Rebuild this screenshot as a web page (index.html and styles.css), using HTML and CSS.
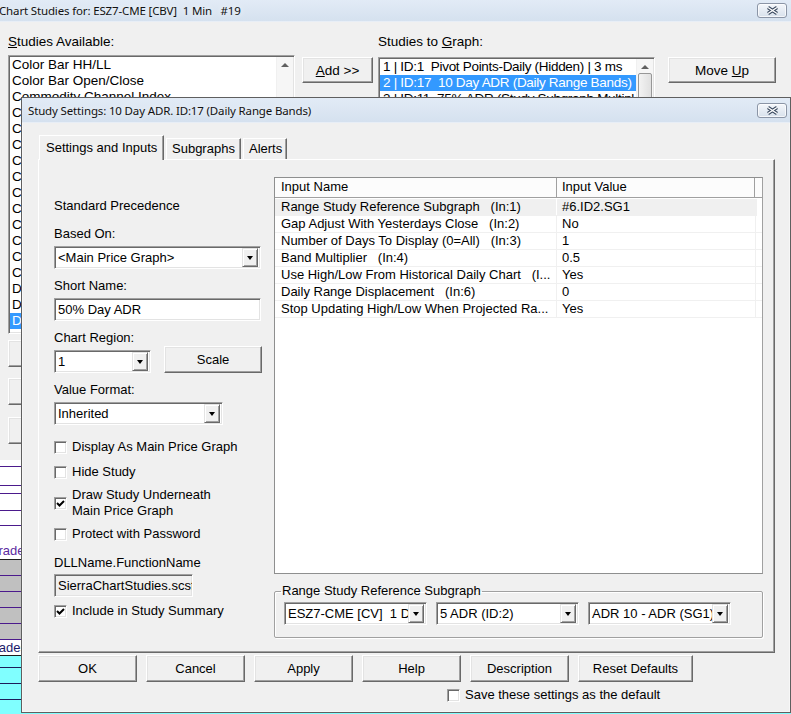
FILE: index.html
```html
<!DOCTYPE html>
<html lang="en">

<head>
    <meta charset="UTF-8">
    <title>Study Settings</title>
    <link rel="stylesheet" href="styles.css">
</head>

<body>
    <div class="desktop">
        <!-- background window -->
        <div class="main-win">
            <div class="titlebar">
                <span class="title">Chart Studies for: ESZ7-CME [CBV]  1 Min   #19</span>
                <span class="close-btn">
                    <svg width="13" height="9" viewBox="0 0 13 9"><path d="M2 1.5 L11 7.5 M11 1.5 L2 7.5" stroke="#3b4a60" stroke-width="3.4" /><path d="M2 1.5 L11 7.5 M11 1.5 L2 7.5" stroke="#fff" stroke-width="1.4" /></svg>
                </span>
            </div>
            <div class="main-body">
                <div class="avail-col">
                    <p class="lbl"><u>S</u>tudies Available:</p>
                    <div class="listbox avail-list">
                        <div class="list-items">
                            <p>Color Bar HH/LL</p>
                            <p>Color Bar Open/Close</p>
                            <p>Commodity Channel Index</p>
                            <p>Commitment of Traders</p>
                            <p>Compare Study Subgraphs</p>
                            <p>Connors RSI</p>
                            <p>Correlation Coefficient</p>
                            <p>Countdown Timer</p>
                            <p>Cumulative Delta Bars - Ticks</p>
                            <p>Cumulative Delta Bars - Trade Size</p>
                            <p>Cumulative Delta Bars - Volume</p>
                            <p>Cumulative Sum of Study</p>
                            <p>Cumulative Volume</p>
                            <p>Cycle Period</p>
                            <p>Daily High/Low Lines</p>
                            <p>Daily OHLC</p>
                            <p class="sel">Daily Range Bands</p>
                            <p>Darvas Box</p>
                        </div>
                        <div class="vscroll"><span class="up-arrow"></span></div>
                    </div>
                    <button class="btn side-btn"><span>Remove</span></button>
                    <button class="btn side-btn gap"><span>Settings</span></button>
                    <button class="btn side-btn gap2"><span>Find</span></button>
                </div>
                <div class="add-col">
                    <button class="btn add-btn"><span><u>A</u>dd &gt;&gt;</span></button>
                </div>
                <div class="graph-col">
                    <p class="lbl">Studies to <u>G</u>raph:</p>
                    <div class="listbox graph-list">
                        <div class="list-items">
                            <p>1 | ID:1  Pivot Points-Daily (Hidden) | 3 ms</p>
                            <p class="sel">2 | ID:17  10 Day ADR (Daily Range Bands)</p>
                            <p>3 | ID:11  75% ADR (Study Subgraph Multipl</p>
                        </div>
                        <div class="vscroll"><span class="up-arrow"></span><span class="thumb"></span></div>
                    </div>
                </div>
                <div class="move-col">
                    <button class="btn move-btn"><span>Move <u>U</u>p</span></button>
                </div>
            </div>
        </div>

        <!-- chart data rows peeking out behind the dialog -->
        <div class="chart-rows">
            <div class="crow h7"></div>
            <div class="crow h19"></div>
            <div class="crow h8"></div>
            <div class="crow h17"></div>
            <div class="crow h15"></div>
            <div class="crow h34 label">Trades</div>
            <div class="crow grey"></div>
            <div class="crow grey"></div>
            <div class="crow grey"></div>
            <div class="crow grey"></div>
            <div class="crow grey"></div>
            <div class="crow label short">Trades</div>
            <div class="crow cyan h12"></div>
            <div class="crow cyan"></div>
            <div class="crow cyan"></div>
            <div class="crow cyan"></div>
        </div>

        <!-- Study Settings dialog -->
        <div class="dialog">
            <div class="titlebar dlg-title">
                <span class="title">Study Settings: 10 Day ADR. ID:17 (Daily Range Bands)</span>
                <span class="close-btn">
                    <svg width="13" height="9" viewBox="0 0 13 9"><path d="M2 1.5 L11 7.5 M11 1.5 L2 7.5" stroke="#3b4a60" stroke-width="3.4" /><path d="M2 1.5 L11 7.5 M11 1.5 L2 7.5" stroke="#fff" stroke-width="1.4" /></svg>
                </span>
            </div>
            <div class="dlg-body">
                <div class="tabs">
                    <div class="tab active">Settings and Inputs</div>
                    <div class="tab sub">Subgraphs</div>
                    <div class="tab alerts">Alerts</div>
                </div>
                <div class="panel">
                    <div class="left-col">
                        <p class="txt">Standard Precedence</p>
                        <p class="txt mt12">Based On:</p>
                        <div class="combo w207">
                            <span class="combo-val">&lt;Main Price Graph&gt;</span>
                            <span class="drop"><i></i></span>
                        </div>
                        <p class="txt mt9">Short Name:</p>
                        <div class="field w207">50% Day ADR</div>
                        <p class="txt mt9">Chart Region:</p>
                        <div class="region-row">
                            <div class="combo w97">
                                <span class="combo-val">1</span>
                                <span class="drop"><i></i></span>
                            </div>
                            <button class="btn scale-btn"><span>Scale</span></button>
                        </div>
                        <p class="txt mt9">Value Format:</p>
                        <div class="combo w169">
                            <span class="combo-val">Inherited</span>
                            <span class="drop"><i></i></span>
                        </div>
                        <div class="check-row mt14">
                            <span class="chk"></span>
                            <span>Display As Main Price Graph</span>
                        </div>
                        <div class="check-row mt9">
                            <span class="chk"></span>
                            <span>Hide Study</span>
                        </div>
                        <div class="check-row mt7">
                            <span class="chk"><svg width="11" height="11" viewBox="0 0 11 11"><path d="M2 5 L4.5 7.5 L9 3" stroke="#000" stroke-width="2" fill="none" /></svg></span>
                            <span>Draw Study Underneath<br>Main Price Graph</span>
                        </div>
                        <div class="check-row mt7">
                            <span class="chk"></span>
                            <span>Protect with Password</span>
                        </div>
                        <p class="txt mt13">DLLName.FunctionName</p>
                        <div class="field readonly w139">SierraChartStudies.scsf_DailyRangeBands</div>
                        <div class="check-row mt6">
                            <span class="chk"><svg width="11" height="11" viewBox="0 0 11 11"><path d="M2 5 L4.5 7.5 L9 3" stroke="#000" stroke-width="2" fill="none" /></svg></span>
                            <span>Include in Study Summary</span>
                        </div>
                    </div>

                    <div class="right-col">
                        <div class="grid">
                            <div class="grid-head">
                                <span class="hcell name-col">Input Name</span>
                                <span class="hcell value-col">Input Value</span>
                                <span class="hcell rest"></span>
                            </div>
                            <div class="grid-rows">
                                <div class="grow hot"><span class="name-col">Range Study Reference Subgraph   (In:1)</span><span class="value-col">#6.ID2.SG1</span></div>
                                <div class="grow"><span class="name-col">Gap Adjust With Yesterdays Close   (In:2)</span><span class="value-col">No</span></div>
                                <div class="grow"><span class="name-col">Number of Days To Display (0=All)   (In:3)</span><span class="value-col">1</span></div>
                                <div class="grow"><span class="name-col">Band Multiplier   (In:4)</span><span class="value-col">0.5</span></div>
                                <div class="grow"><span class="name-col">Use High/Low From Historical Daily Chart   (I...</span><span class="value-col">Yes</span></div>
                                <div class="grow"><span class="name-col">Daily Range Displacement   (In:6)</span><span class="value-col">0</span></div>
                                <div class="grow"><span class="name-col">Stop Updating High/Low When Projected Ra...</span><span class="value-col">Yes</span></div>
                            </div>
                        </div>
                        <fieldset class="group">
                            <legend>Range Study Reference Subgraph</legend>
                            <div class="group-combos">
                                <div class="combo w143">
                                    <span class="combo-val">ESZ7-CME [CV]  1 Day</span>
                                    <span class="drop"><i></i></span>
                                </div>
                                <div class="combo w143">
                                    <span class="combo-val">5 ADR (ID:2)</span>
                                    <span class="drop"><i></i></span>
                                </div>
                                <div class="combo w143">
                                    <span class="combo-val">ADR 10 - ADR (SG1)</span>
                                    <span class="drop"><i></i></span>
                                </div>
                            </div>
                        </fieldset>
                    </div>
                </div>

                <div class="dlg-buttons">
                    <button class="btn dlg-btn"><span>OK</span></button>
                    <button class="btn dlg-btn"><span>Cancel</span></button>
                    <button class="btn dlg-btn"><span>Apply</span></button>
                    <button class="btn dlg-btn"><span>Help</span></button>
                    <button class="btn dlg-btn"><span>Description</span></button>
                    <button class="btn dlg-btn wide"><span>Reset Defaults</span></button>
                </div>
                <div class="check-row save-row">
                    <span class="chk"></span>
                    <span>Save these settings as the default</span>
                </div>
            </div>
        </div>
    </div>
</body>

</html>
```

FILE: styles.css
```css
* {
    margin: 0;
    padding: 0;
    box-sizing: border-box;
}

body {
    background: #f0f0f0;
    font-family: "Liberation Sans", Arial, sans-serif;
    font-size: 13px;
    color: #000;
}

.desktop {
    position: relative;
    width: 791px;
    height: 714px;
    overflow: hidden;
    background: #f0f0f0;
}

/* window chrome */
.titlebar {
    display: flex;
    align-items: center;
    justify-content: space-between;
    height: 22px;
    padding-right: 4px;
    background: linear-gradient(#e2ebf6, #d5e1ef);
    border-bottom: 1px solid #e8eef6;
}

.title {
    white-space: pre;
    font-family: "Noto Sans", "Open Sans", sans-serif;
    font-size: 11.5px;
    letter-spacing: -0.15px;
    color: #111;
    text-shadow: 0 0 6px #fff;
}

.main-win .title {
    margin-left: -1px;
}

.close-btn {
    display: flex;
    align-items: center;
    justify-content: center;
    width: 30px;
    height: 15px;
    border: 1px solid #8b95a6;
    border-radius: 3px;
    background: linear-gradient(#f4f7fb, #d8e1ec);
    box-shadow: inset 0 0 0 1px rgba(255, 255, 255, .7);
}

/* buttons */
.btn {
    display: flex;
    align-items: center;
    justify-content: center;
    font-family: inherit;
    font-size: 13px;
    color: #000;
    white-space: pre;
    background: #f0f0f0;
    border: 1px solid;
    border-color: #fff #696969 #696969 #fff;
    box-shadow: inset -1px -1px 0 #a0a0a0, inset 1px 1px 0 #e3e3e3;
}

/* background window */
.main-win {
    height: 460px;
    background: #f0f0f0;
}

.main-body {
    display: flex;
    padding: 12px 0 0 8px;
    font-size: 13.5px;
}

.main-body .btn {
    font-size: 13.5px;
}

.lbl {
    line-height: 16px;
}

.avail-col {
    width: 287px;
}

.listbox {
    display: flex;
    background: #fff;
    border: 1px solid;
    border-color: #a0a0a0 #fff #fff #a0a0a0;
    box-shadow: inset 1px 1px 0 #696969, inset -1px -1px 0 #e3e3e3;
    padding: 1px;
    overflow: hidden;
}

.avail-list {
    margin-top: 5px;
    height: 279px;
}

.list-items {
    flex: 1;
    overflow: hidden;
}

.list-items p {
    height: 16px;
    line-height: 16px;
    padding-left: 2px;
    white-space: pre;
}

.list-items p.sel {
    background: #3399ff;
    color: #fff;
}

.vscroll {
    position: relative;
    width: 17px;
    background: #f6f6f6;
    border-left: 1px solid #f0f0f0;
}

.up-arrow {
    display: block;
    margin: 6px auto 0;
    width: 0;
    height: 0;
    border-left: 4px solid transparent;
    border-right: 4px solid transparent;
    border-bottom: 4px solid #606060;
}

.thumb {
    display: block;
    margin: 4px 1px 0;
    height: 40px;
    border: 1px solid #979797;
    border-radius: 2px;
    background: linear-gradient(90deg, #f3f3f3, #e0e0e0);
}

.side-btn {
    margin-top: 6px;
    width: 100px;
    height: 27px;
}

.side-btn.gap {
    margin-top: 11px;
}

.side-btn.gap2 {
    margin-top: 12px;
}

.add-col {
    margin-left: 7px;
    padding-top: 23px;
}

.add-btn {
    width: 71px;
    height: 26px;
}

.graph-col {
    margin-left: 5px;
}

.graph-list {
    margin-top: 7px;
    width: 277px;
    height: 60px;
}

.graph-list .list-items p {
    padding-left: 3px;
    letter-spacing: -0.3px;
}

.move-col {
    margin-left: 13px;
    padding-top: 23px;
}

.move-btn {
    width: 108px;
    height: 26px;
}

/* chart rows behind */
.chart-rows {
    background: #fff;
}

.crow {
    height: 16px;
    border-bottom: 1px solid #4b1a8c;
    font-size: 13px;
    color: #5b2aa0;
    white-space: nowrap;
}

.crow.h7 { height: 7px; }
.crow.h19 { height: 19px; }
.crow.h8 { height: 8px; }
.crow.h17 { height: 17px; }
.crow.h15 { height: 15px; }
.crow.h12 { height: 12px; }

.crow.h34 {
    height: 34px;
    padding-top: 17px;
}

.crow.label {
    margin-left: -9px;
    border-bottom-color: #1d1d1d;
}

.crow.short {
    margin-left: -13px;
    color: #1a1a6a;
}

.crow.grey {
    background: #c0c0c0;
}

.crow.cyan {
    background: #80ffff;
    border-bottom-color: #1d1d5a;
}

/* dialog */
.dialog {
    position: absolute;
    left: 21px;
    top: 97px;
    width: 770px;
    height: 616px;
    background: #f0f0f0;
    border: 1px solid #5f5f5f;
    box-shadow: inset 0 0 0 1px #f7f7f7;
}

.dlg-title {
    height: 25px;
    padding-left: 6px;
    padding-right: 3px;
}

.dlg-body {
    padding: 12px 0 0 16px;
}

.tabs {
    display: flex;
    align-items: flex-end;
    height: 24px;
    padding-left: 1px;
}

.tab {
    height: 21px;
    line-height: 19px;
    padding-left: 5px;
    border: 1px solid;
    border-bottom: none;
    border-color: #fff #696969 #696969 #fff;
    box-shadow: inset -1px 0 0 #a0a0a0;
    background: #f0f0f0;
}

.tab.active {
    position: relative;
    z-index: 1;
    width: 125px;
    height: 25px;
    margin-bottom: -1px;
    line-height: 23px;
    padding-left: 6px;
    padding-bottom: 2px;
}

.tab.sub {
    width: 75px;
    margin-left: 2px;
}

.tab.alerts {
    width: 44px;
    margin-left: 2px;
}

.panel {
    display: flex;
    width: 737px;
    height: 494px;
    border: 1px solid;
    border-color: #fff #696969 #696969 #fff;
    box-shadow: inset -1px -1px 0 #a0a0a0;
}

.left-col {
    width: 223px;
    padding: 38px 0 0 15px;
}

.txt {
    line-height: 16px;
    white-space: nowrap;
}

.mt6 { margin-top: 6px; }
.mt7 { margin-top: 7px; }
.mt9 { margin-top: 9px; }
.mt12 { margin-top: 12px; }
.mt13 { margin-top: 13px; }
.mt14 { margin-top: 14px; }

.combo,
.field {
    display: flex;
    align-items: center;
    height: 23px;
    background: #fff;
    border: 1px solid;
    border-color: #a0a0a0 #fff #fff #a0a0a0;
    box-shadow: inset 1px 1px 0 #696969, inset -1px -1px 0 #e3e3e3;
    padding: 2px;
    white-space: pre;
    overflow: hidden;
}

.combo {
    margin-top: 4px;
}

.combo-val {
    flex: 1;
    padding-left: 1px;
    overflow: hidden;
}

.drop {
    display: flex;
    align-items: center;
    justify-content: center;
    width: 16px;
    height: 19px;
    background: #f0f0f0;
    border: 1px solid;
    border-color: #e3e3e3 #696969 #696969 #e3e3e3;
    box-shadow: inset 1px 1px 0 #fff, inset -1px -1px 0 #a0a0a0;
}

.drop i {
    width: 0;
    height: 0;
    border-left: 3.5px solid transparent;
    border-right: 3.5px solid transparent;
    border-top: 4px solid #000;
}

.field {
    margin-top: 4px;
    padding-left: 3px;
}

.field.readonly {
    margin-top: 3px;
    background: #f0f0f0;
    padding-left: 3px;
}

.w207 { width: 207px; }
.w97 { width: 97px; }
.w169 { width: 169px; }
.w139 { width: 139px; }
.w143 { width: 143px; }

.region-row {
    display: flex;
    align-items: flex-end;
    justify-content: space-between;
    width: 208px;
}

.scale-btn {
    width: 98px;
    height: 27px;
}

.check-row {
    display: flex;
    align-items: center;
    line-height: 16px;
    white-space: nowrap;
}

.chk {
    flex: none;
    display: flex;
    align-items: center;
    justify-content: center;
    width: 13px;
    height: 13px;
    margin-right: 5px;
    background: #fff;
    border: 1px solid;
    border-color: #a0a0a0 #fff #fff #a0a0a0;
    box-shadow: inset 1px 1px 0 #696969, inset -1px -1px 0 #e3e3e3;
}

/* inputs grid */
.right-col {
    margin-left: 12px;
    padding-top: 17px;
    width: 489px;
}

.grid {
    height: 397px;
    background: #fff;
    border: 1px solid #8e8f8f;
    border-right-color: #a0a0a0;
}

.grid-head {
    display: flex;
    height: 20px;
    background: #fcfcfc;
    border-bottom: 1px solid #a0a0a0;
}

.hcell {
    line-height: 18px;
    white-space: nowrap;
    border-right: 1px solid #a0a0a0;
}

.name-col {
    width: 282px;
    padding-left: 6px;
    white-space: pre;
    overflow: hidden;
}

.value-col {
    width: 199px;
    padding-left: 5px;
    white-space: pre;
}

.hcell.value-col {
    width: 198px;
}

.hcell.rest {
    flex: 1;
    border-right: none;
}

.grid-rows {
    padding-top: 1px;
}

.grow {
    display: flex;
    height: 17px;
    line-height: 16px;
    border-bottom: 1px solid #f0f0f0;
}

.grow .name-col {
    border-right: 1px solid #f0f0f0;
}

.grow .value-col {
    border-right: 1px solid #f0f0f0;
}

.grow.hot {
    background: #f0f0f0;
    margin-right: 5px;
}

.grow.hot .name-col {
    border-right-color: #fff;
}

.group {
    margin-top: 9px;
    height: 55px;
    padding: 0 9px;
    border: 1px solid #a0a0a0;
    border-radius: 2px;
    box-shadow: 1px 1px 0 #fff, inset 1px 1px 0 #fff;
}

.group legend {
    margin-left: -3px;
    padding: 0 1px;
    line-height: 16px;
}

.group-combos {
    display: flex;
    gap: 9px;
}

.group-combos .combo {
    margin-top: 3px;
}

.dlg-buttons {
    display: flex;
    gap: 9px;
    margin-top: 2px;
}

.dlg-btn {
    width: 99px;
    height: 27px;
}

.dlg-btn.wide {
    width: 115px;
}

.save-row {
    margin-top: 5px;
    padding-left: 409px;
}
```
